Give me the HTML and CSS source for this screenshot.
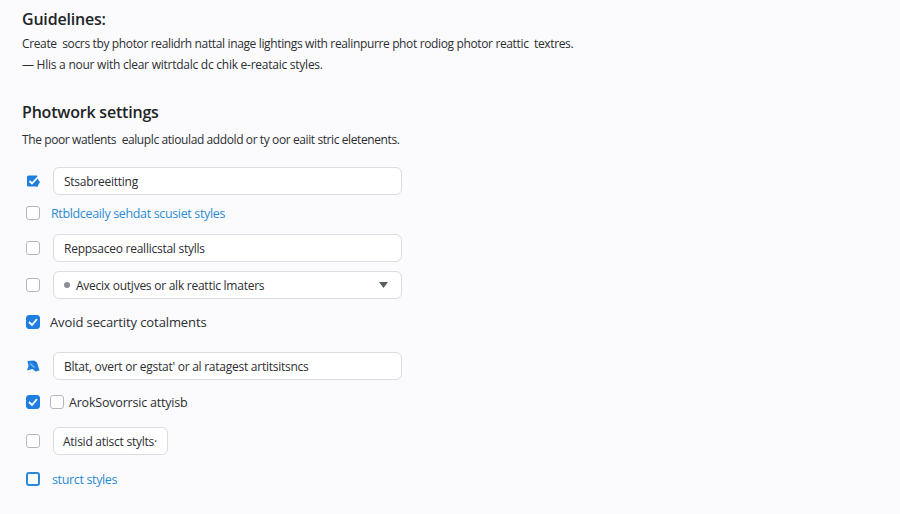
FILE: index.html
```html
<!DOCTYPE html>
<html>
<head>
<meta charset="utf-8">
<link rel="stylesheet" href="styles.css">
</head>
<body>
<main class="page">
  <section class="guidelines">
    <h2 class="title">Guidelines:</h2>
    <p class="line first">Create&nbsp; socrs tby photor realidrh nattal inage lightings with realinpurre phot rodiog photor reattic&nbsp; textres.</p>
    <p class="line">— Hlis a nour with clear witrtdalc dc chik e-reataic styles.</p>
  </section>
  <section class="settings">
    <h2 class="title">Photwork settings</h2>
    <p class="line desc">The poor watlents&nbsp; ealuplc atioulad addold or ty oor eaiit stric eletenents.</p>
    <div class="rows">
      <div class="row r1">
        <span class="icon">
          <svg width="14" height="14" viewBox="0 0 14 14"><rect x="1" y="1.5" width="11" height="11" rx="1.5" fill="#1f7fe0"/><path d="M3.5 7 L6 9.5 L12.5 2.5" stroke="#fff" stroke-width="1.8" fill="none"/><path d="M11.5 6 L13 8 L10.5 12.5" stroke="#1f7fe0" stroke-width="1.6" fill="none"/></svg>
        </span>
        <div class="field wide">Stsabreeitting</div>
      </div>
      <div class="row r2">
        <span class="box"></span>
        <span class="label link">Rtbldceaily sehdat scusiet styles</span>
      </div>
      <div class="row r3">
        <span class="box"></span>
        <div class="field wide">Reppsaceo reallicstal stylls</div>
      </div>
      <div class="row r4">
        <span class="box"></span>
        <div class="field wide select">
          <span class="dot"></span>
          <span class="select-text">Avecix outjves or alk reattic lmaters</span>
          <svg class="caret" width="9" height="6" viewBox="0 0 9 6"><path d="M0 0 H9 L4.5 6 Z" fill="#5a5e64"/></svg>
        </div>
      </div>
      <div class="row r5">
        <span class="box checked"><svg width="10" height="8" viewBox="0 0 10 8"><path d="M1 4 L4 7 L9 1" stroke="#fff" stroke-width="1.8" fill="none"/></svg></span>
        <span class="label big">Avoid secartity cotalments</span>
      </div>
      <div class="row r6">
        <span class="icon">
          <svg width="14" height="12" viewBox="0 0 14 12"><path d="M1.5 1 L8 0.5 L11 2.5 L13.5 10.5 L9.5 11.5 L6.5 9 L1 10.5 L2.5 6 Z" fill="#1f7fe0"/><path d="M4 3.5 L8.5 7.5" stroke="#7fb8ee" stroke-width="1.3"/><path d="M8 2 L10 3" stroke="#0d5fb8" stroke-width="1.2"/></svg>
        </span>
        <div class="field wide">Bltat, overt or egstat' or al ratagest artitsitsncs</div>
      </div>
      <div class="row r7">
        <span class="box checked"><svg width="10" height="8" viewBox="0 0 10 8"><path d="M1 4 L4 7 L9 1" stroke="#fff" stroke-width="1.8" fill="none"/></svg></span>
        <span class="box inner"></span>
        <span class="label">ArokSovorrsic attyisb</span>
      </div>
      <div class="row r8">
        <span class="box"></span>
        <div class="field short">Atisid atisct stylts·</div>
      </div>
      <div class="row r9">
        <span class="box blue"></span>
        <span class="label link">sturct styles</span>
      </div>
    </div>
  </section>
</main>
</body>
</html>
```

FILE: styles.css
```css
html, body {
  margin: 0;
  padding: 0;
  background: #fbfbfd;
}
body {
  font-family: "Open Sans", "Noto Sans", sans-serif;
  color: #2e3033;
  width: 900px;
  height: 514px;
  overflow: hidden;
}
.page {
  padding: 8px 0 0 22px;
}
.title {
  margin: 0;
  font-size: 16px;
  font-weight: 600;
  color: #222426;
  line-height: 22px;
  letter-spacing: -0.2px;
}
.line {
  margin: 0;
  font-size: 12px;
  line-height: 21px;
  letter-spacing: -0.25px;
  color: #2c2e31;
}
.line.first {
  letter-spacing: -0.36px;
}
.guidelines .title {
  margin-bottom: 3px;
}
.settings {
  margin-top: 26px;
}
.settings .title {
  margin-bottom: 6px;
}
.desc {
  letter-spacing: -0.4px;
  margin-bottom: 17px;
}
.rows {
  display: flex;
  flex-direction: column;
}
.row {
  display: flex;
  align-items: center;
  height: 28px;
  padding-left: 4px;
}
.r2 { margin-top: 4px; }
.r3 { margin-top: 7px; }
.r4 { margin-top: 9px; }
.r5 { margin-top: 9px; }
.r6 { margin-top: 16px; }
.r7 { margin-top: 8px; }
.r8 { margin-top: 11px; }
.r9 { margin-top: 10px; }
.icon {
  width: 14px;
  height: 14px;
  display: flex;
  align-items: center;
  justify-content: center;
  margin-right: 13px;
}
.box {
  box-sizing: border-box;
  width: 14px;
  height: 14px;
  border: 1.5px solid #b4b8be;
  border-radius: 3px;
  background: #fff;
  margin-right: 11px;
  display: flex;
  align-items: center;
  justify-content: center;
  flex: none;
}
.r3 .box, .r4 .box, .r8 .box {
  margin-right: 13px;
}
.box.checked {
  background: #1f7fe0;
  border-color: #1f7fe0;
  margin-right: 10px;
}
.box.inner {
  margin-right: 5px;
}
.box.blue {
  border-color: #2b89d8;
  border-width: 2px;
  margin-right: 12px;
}
.label {
  font-size: 12.5px;
  letter-spacing: -0.2px;
  color: #2c2e31;
}
.label.big {
  font-size: 13px;
  letter-spacing: -0.1px;
}
.label.link {
  color: #2b8bd2;
  letter-spacing: -0.35px;
}
.field {
  box-sizing: border-box;
  height: 28px;
  background: #fff;
  border: 1px solid #d9dce0;
  border-radius: 6px;
  display: flex;
  align-items: center;
  padding-left: 10px;
  font-size: 12px;
  letter-spacing: -0.25px;
  color: #2c2e31;
}
.field.wide {
  width: 349px;
}
.field.short {
  width: 115px;
  padding-left: 9px;
}
.select {
  padding-left: 10px;
  padding-right: 13px;
}
.dot {
  width: 6px;
  height: 6px;
  border-radius: 50%;
  background: #8a8e94;
  margin-right: 6px;
}
.select-text {
  flex: 1;
}
.caret {
  flex: none;
}
```
